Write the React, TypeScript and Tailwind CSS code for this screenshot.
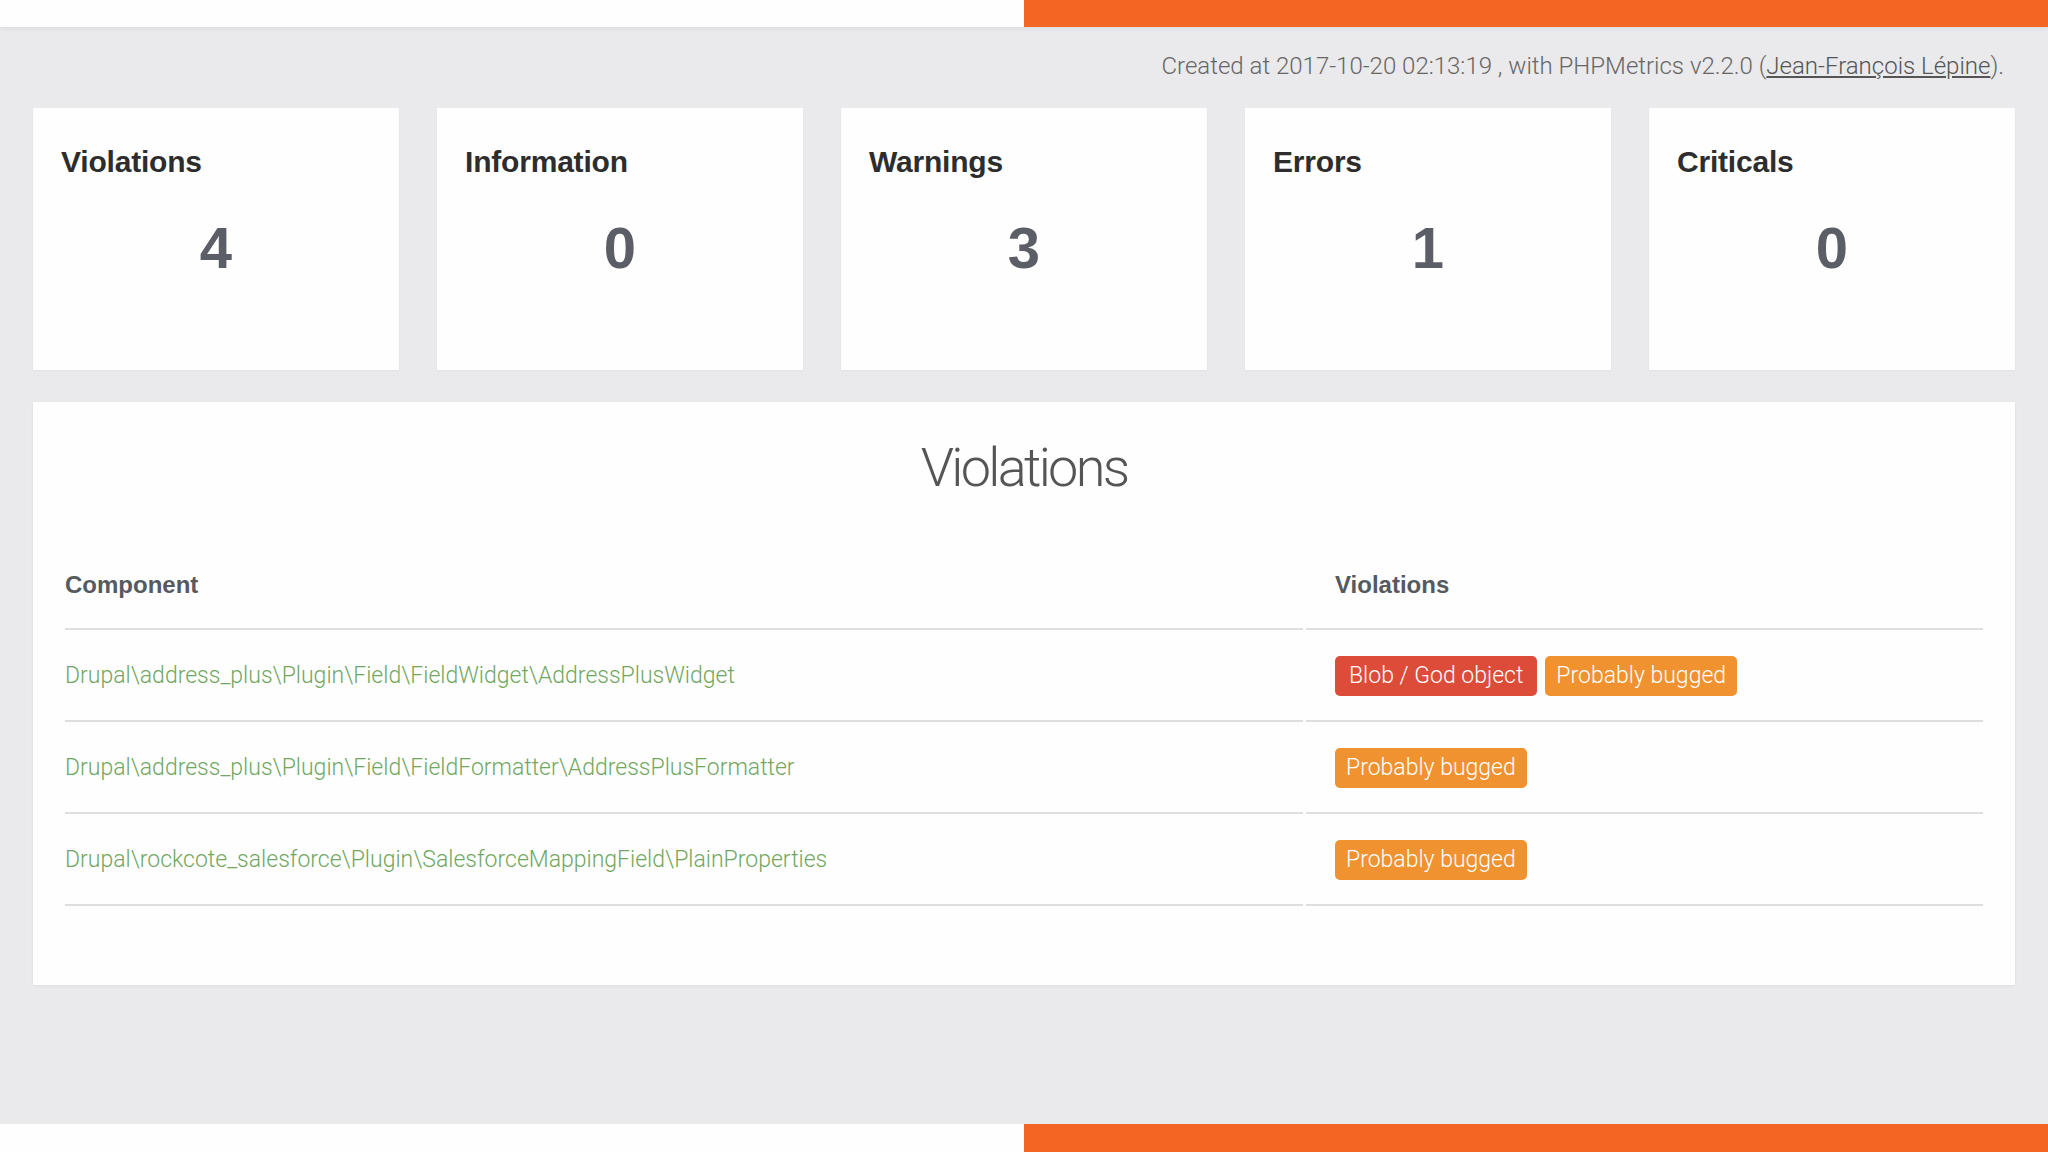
import React from "react";

const STATS = [
  { label: "Violations", value: 4 },
  { label: "Information", value: 0 },
  { label: "Warnings", value: 3 },
  { label: "Errors", value: 1 },
  { label: "Criticals", value: 0 },
];

type Badge = { text: string; kind: "red" | "orange" };

const ROWS: { name: string; badges: Badge[] }[] = [
  {
    name: "Drupal\\address_plus\\Plugin\\Field\\FieldWidget\\AddressPlusWidget",
    badges: [
      { text: "Blob / God object", kind: "red" },
      { text: "Probably bugged", kind: "orange" },
    ],
  },
  {
    name: "Drupal\\address_plus\\Plugin\\Field\\FieldFormatter\\AddressPlusFormatter",
    badges: [{ text: "Probably bugged", kind: "orange" }],
  },
  {
    name: "Drupal\\rockcote_salesforce\\Plugin\\SalesforceMappingField\\PlainProperties",
    badges: [{ text: "Probably bugged", kind: "orange" }],
  },
];

function StripeBar({ top }: { top?: boolean }) {
  return (
    <div className={`flex shrink-0 ${top ? "h-[27px] shadow-[0_2px_4px_rgba(0,0,0,0.06)]" : "h-[28px]"}`}>
      <div className="flex-1 bg-[#fefefe]" />
      <div className="flex-1 bg-[#f36523]" />
    </div>
  );
}

export default function App() {
  return (
    <div className="flex h-[1152px] flex-col bg-[#eae9eb] font-['Liberation_Sans',Arial,sans-serif]">
      <StripeBar top />

      <div className="flex-1 px-[33px]">
        <p className="pt-[26px] pr-[11px] text-right font-['Roboto',sans-serif] text-[24px] font-light leading-[26px] text-[#666]">
          Created at 2017-10-20 02:13:19 , with PHPMetrics v2.2.0 (
          <a href="#" className="text-[#555] underline">Jean-François Lépine</a>).
        </p>

        {/* summary cards */}
        <div className="mt-[29px] grid grid-cols-5 gap-x-[38px]">
          {STATS.map((s) => (
            <div key={s.label} className="h-[262px] bg-[#fefefe] shadow-[0_1px_2px_rgba(0,0,0,0.04)]">
              <h3 className="pt-[38px] pl-[28px] text-[30px] font-bold leading-[32px] tracking-[-0.2px] text-[#2d2d2d]">
                {s.label}
              </h3>
              <div className="mt-[41px] text-center text-[58px] font-bold leading-none text-[#5b5e66]">
                {s.value}
              </div>
            </div>
          ))}
        </div>

        {/* violations table */}
        <div className="mt-[32px] h-[583px] bg-[#fefefe] px-[32px] shadow-[0_1px_3px_rgba(0,0,0,0.05)]">
          <h2 className="pt-[36px] text-center font-['Roboto',sans-serif] text-[54px] font-light leading-[60px] tracking-tighter text-[#555]">
            Violations
          </h2>

          <div className="mt-[73px] grid grid-cols-[1238px_1fr] gap-x-[3px]">
            <div className="border-b-2 border-[#dedde0] pb-[29px] text-[24px] font-bold leading-[28px] text-[#555a60]">
              Component
            </div>
            <div className="border-b-2 border-[#dedde0] pb-[29px] pl-[29px] text-[24px] font-bold leading-[28px] text-[#555a60]">
              Violations
            </div>

            {ROWS.map((r) => (
              <React.Fragment key={r.name}>
                <div className="flex h-[92px] items-center border-b-2 border-[#dedde0] pt-[2px] font-['Roboto',sans-serif] text-[23px] font-light text-[#72a762]">
                  {r.name}
                </div>
                <div className="flex h-[92px] items-center gap-[8px] border-b-2 border-[#dedde0] pt-[2px] pl-[29px]">
                  {r.badges.map((b, i) => (
                    <span
                      key={i}
                      className={`flex h-[40px] items-center rounded-[5px] font-['Roboto',sans-serif] text-[23px] font-light text-white ${
                        b.kind === "red" ? "bg-[#dd4b39] px-[14px]" : "bg-[#f0922f] px-[11px]"
                      }`}
                    >
                      {b.text}
                    </span>
                  ))}
                </div>
              </React.Fragment>
            ))}
          </div>
        </div>
      </div>

      <StripeBar />
    </div>
  );
}
